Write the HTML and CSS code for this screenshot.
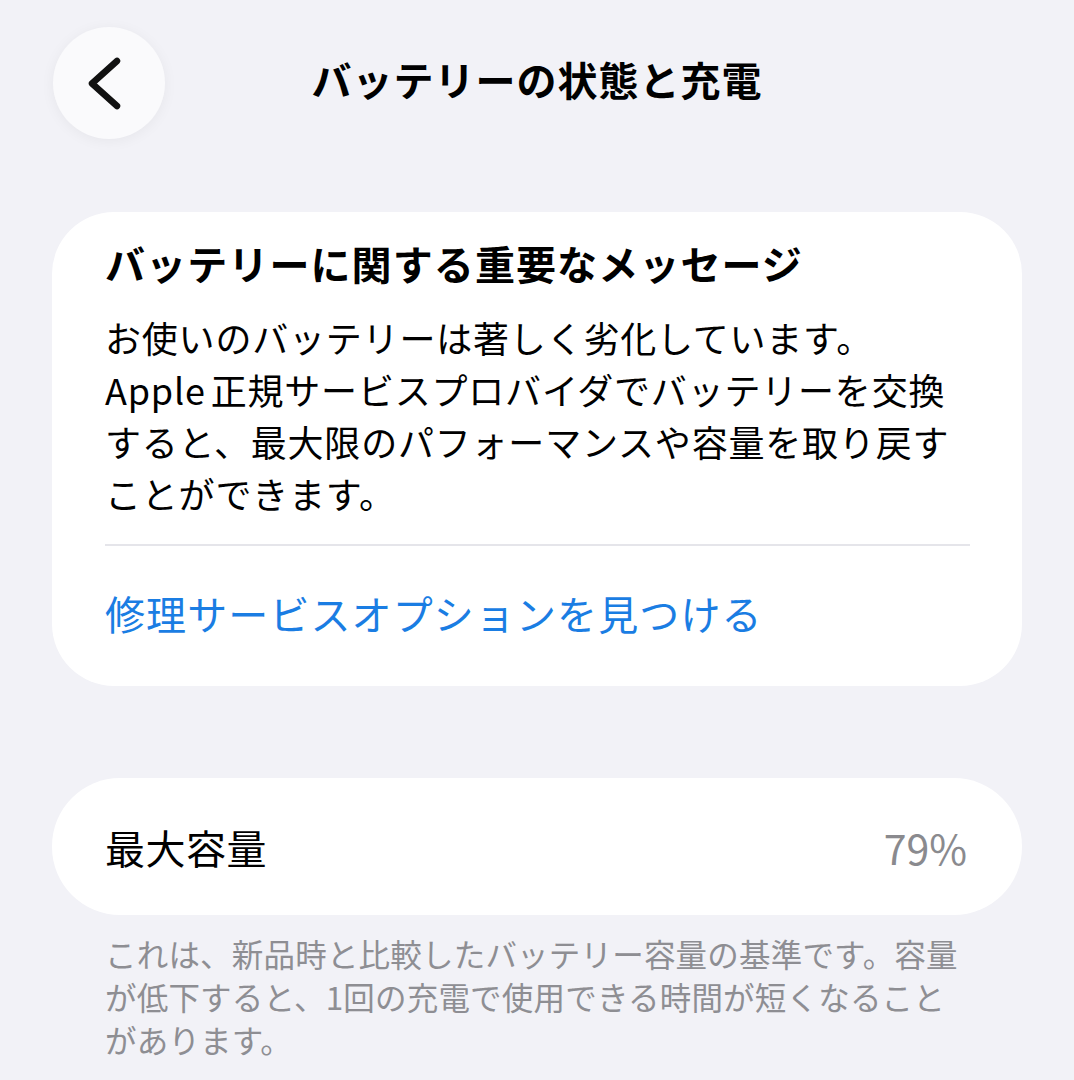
FILE: index.html
```html
<!DOCTYPE html>
<html lang="ja">
<head>
    <meta charset="UTF-8">
    <meta name="viewport" content="width=device-width, initial-scale=1.0">
    <title>バッテリーの状態と充電</title>
    <link rel="stylesheet" href="styles.css">
</head>
<body>

    <div class="nav-bar">
        <div class="nav-left">
            <button class="back-button" aria-label="戻る">
                <svg width="112" height="112" viewBox="0 0 112 112">
                    <path d="M64 34 L39 56.5 L64 79" fill="none" stroke="#111" stroke-width="6.5" stroke-linecap="round" stroke-linejoin="round"/>
                </svg>
            </button>
        </div>
        <h1 class="nav-title">バッテリーの状態と充電</h1>
        <div></div>
    </div>

    <div class="card message-card">
        <h2>バッテリーに関する重要なメッセージ</h2>
        <p class="message-text">お使いのバッテリーは著しく劣化しています。<br><span class="latin">Apple</span>正規サービスプロバイダでバッテリーを交換<br>すると、最大限のパフォーマンスや容量を取り戻す<br>ことができます。</p>
        <hr>
        <div class="link-row">
            <a href="#">修理サービスオプションを見つける</a>
        </div>
    </div>

    <div class="card capacity-card">
        <span class="row-label">最大容量</span>
        <span class="row-value">79%</span>
    </div>
    <p class="footnote">これは、新品時と比較したバッテリー容量の基準です。容量<br>が低下すると、1回の充電で使用できる時間が短くなること<br>があります。</p>

</body>
</html>
```

FILE: styles.css
```css
body {
    font-family: "Noto Sans CJK JP", "Noto Sans", sans-serif;
    margin: 0;
    padding: 27px 52px 0;
    background-color: #f2f2f7;
    color: #000;
    height: 100vh;
    box-sizing: border-box;
    overflow: hidden;
}
.nav-bar {
    display: grid;
    grid-template-columns: 1fr auto 1fr;
    align-items: center;
    height: 112px;
}
.nav-left {
    display: flex;
}
.back-button {
    width: 112px;
    height: 112px;
    margin-left: 1px;
    padding: 0;
    border: none;
    border-radius: 50%;
    background-color: #fafafc;
    box-shadow: 0 2px 14px rgba(0, 0, 0, 0.05);
    display: flex;
    cursor: pointer;
}
.nav-title {
    margin: 0 0 8px;
    font-size: 40px;
    font-weight: 700;
    line-height: 52px;
    letter-spacing: 1px;
}
.card {
    background-color: #fff;
    border-radius: 62px;
}
.message-card {
    margin-top: 73px;
    padding: 25px 52px 0 53px;
}
.message-card h2 {
    margin: 0;
    font-size: 40px;
    font-weight: 700;
    line-height: 52px;
    letter-spacing: 1.1px;
}
.message-text {
    margin: 22px 0 0;
    font-size: 36px;
    line-height: 52px;
    letter-spacing: 0.8px;
}
.message-text .latin {
    margin-right: 5px;
}
.message-card hr {
    margin: 25px 0 0;
    border: none;
    border-top: 2px solid #e5e5ea;
}
.link-row {
    padding: 41px 0 47px;
}
.link-row a {
    color: #1a7de3;
    text-decoration: none;
    font-size: 40px;
    line-height: 52px;
    letter-spacing: 1.1px;
}
.capacity-card {
    margin-top: 92px;
    height: 137px;
    padding: 0 55px 0 53px;
    border-radius: 68px;
    display: flex;
    align-items: center;
    justify-content: space-between;
    font-size: 40px;
}
.row-label {
    letter-spacing: 0.5px;
}
.row-value {
    color: #8a8a8e;
    font-size: 41px;
}
.footnote {
    margin: 17px 0 0;
    padding: 0 53px;
    color: #8e8e93;
    font-size: 31.5px;
    line-height: 43px;
    letter-spacing: 0.2px;
}
```
